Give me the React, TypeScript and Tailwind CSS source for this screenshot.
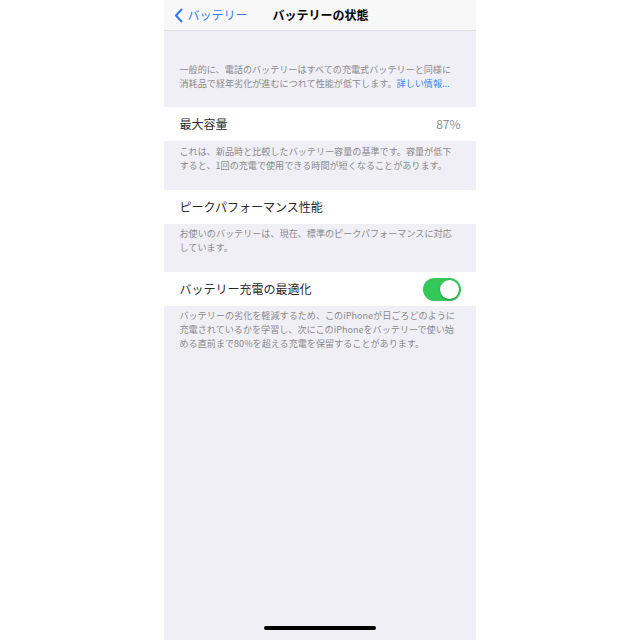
import React from "react";

const font = { fontFamily: '"Noto Sans CJK JP", "Noto Sans", sans-serif' };

function Footer({ children, h, pt = "pt-[2px]" }: { children: React.ReactNode; h: string; pt?: string }) {
  return (
    <div className={`px-4 ${pt} text-[9.1px] leading-[14px] text-[#8a8a8e] ${h}`}>{children}</div>
  );
}

function Row({ children, right }: { children: React.ReactNode; right?: React.ReactNode }) {
  return (
    <div className="h-[34px] bg-white flex items-center justify-between pl-4 pr-[15px]">
      <span className="text-[12px] text-[#2a2a2a]">{children}</span>
      {right}
    </div>
  );
}

export default function App() {
  return (
    <div className="w-[640px] h-[640px] bg-white flex justify-center" style={font}>
      <div className="w-[312px] ml-[-1px] h-full bg-[#f0eff5] flex flex-col relative">
        <div className="h-[31px] bg-[#f8f8f8] border-b border-[#e2e2e6] flex items-center relative">
          <div className="flex items-center pl-[10px] text-[#2f7cf6]">
            <svg width="10" height="15" viewBox="0 0 10 15" className="mr-[4px]">
              <path d="M7.5 1.5 L2 7.5 L7.5 13.5" fill="none" stroke="#2f7cf6" strokeWidth="2" strokeLinecap="round" strokeLinejoin="round" />
            </svg>
            <span className="text-[12px]">バッテリー</span>
          </div>
          <span className="absolute left-0 right-0 text-center text-[12px] font-bold text-black pointer-events-none pl-[2px]">バッテリーの状態</span>
        </div>
        <div className="h-[29px]" />
        <Footer h="h-[47px]">
          <p>一般的に、電話のバッテリーはすべての充電式バッテリーと同様に</p>
          <p>
            消耗品で経年劣化が進むにつれて性能が低下します。<span className="text-[#3a86f0]">詳しい情報...</span>
          </p>
        </Footer>
        <Row right={<span className="text-[12px] text-[#8e8e93]">87%</span>}>最大容量</Row>
        <Footer h="h-[49px]" pt="pt-[3px]">
          これは、新品時と比較したバッテリー容量の基準です。容量が低下すると、1回の充電で使用できる時間が短くなることがあります。
        </Footer>
        <Row>ピークパフォーマンス性能</Row>
        <Footer h="h-[48px]">
          お使いのバッテリーは、現在、標準のピークパフォーマンスに対応しています。
        </Footer>
        <Row
          right={
            <div className="w-[38px] h-[23px] rounded-full bg-[#34c759] relative">
              <div className="absolute right-[2px] top-[2px] w-[19px] h-[19px] rounded-full bg-white shadow-[0_1px_2px_rgba(0,0,0,0.25)]" />
            </div>
          }
        >
          バッテリー充電の最適化
        </Row>
        <Footer h="h-[60px]">
          バッテリーの劣化を軽減するため、このiPhoneが日ごろどのように充電されているかを学習し、次にこのiPhoneをバッテリーで使い始める直前まで80%を超える充電を保留することがあります。
        </Footer>
        <div className="flex-1" />
        <div className="h-[14px] flex justify-center">
          <div className="w-[112px] h-[4px] rounded-full bg-black" />
        </div>
      </div>
    </div>
  );
}
